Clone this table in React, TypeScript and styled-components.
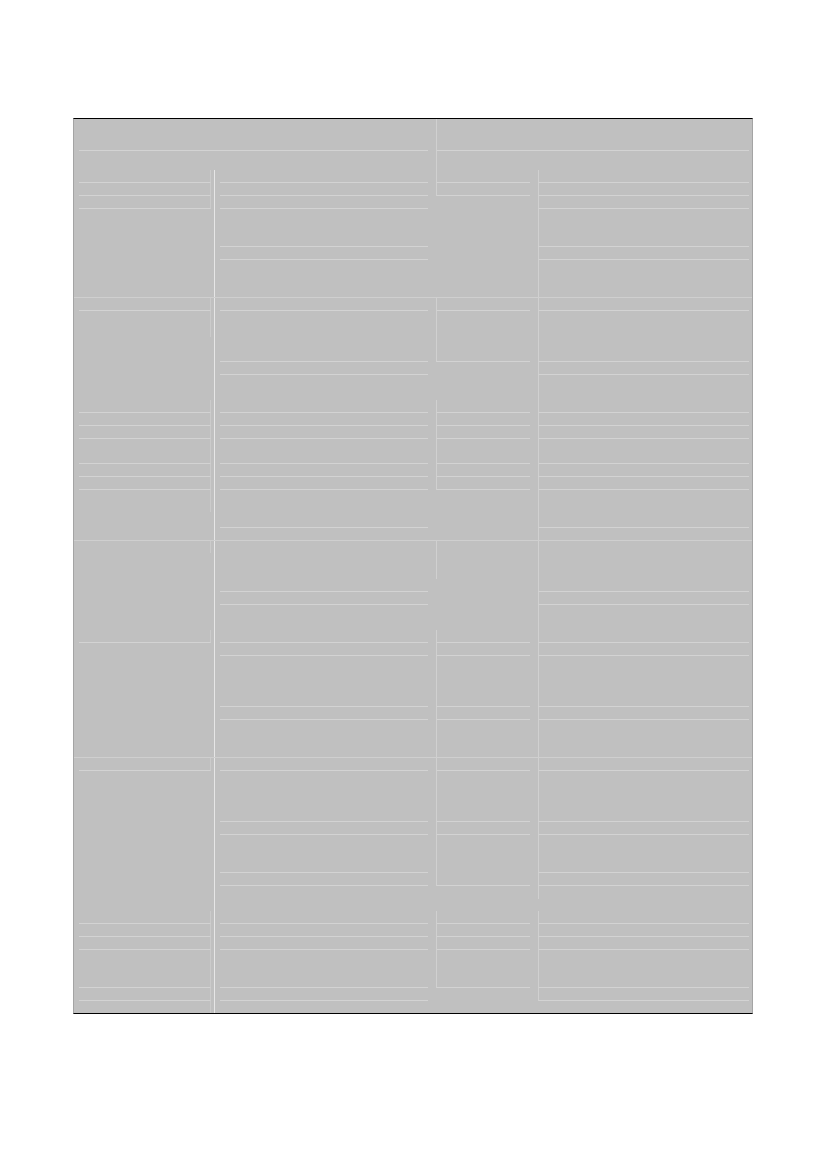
import React from "react";
import styled, { createGlobalStyle } from "styled-components";

const GlobalStyle = createGlobalStyle`
  html, body { margin: 0; padding: 0; background: #ffffff; }
  body { font-family: "Liberation Sans", Arial, sans-serif; }
`;

type Side = "left" | "right";

interface ColKind {
  pad: number;
  width: number;
  side: Side;
  sideColor: string;
  divider?: boolean;
}

interface ColSpec {
  kind: ColKind;
  rules: number[];
  sides?: [number, number][];
}

interface BandSpec {
  id: string;
  template: string;
  sep: boolean;
  top: number;
  bottom: number;
  cols: ColSpec[];
}

const RULE = "#d3d3d3";
const DIVIDER = "#e6e6e6";
const SEP = "#cfcfcf";

const K = {
  headLeft: { pad: 5, width: 349, side: "right", sideColor: "#cccccc" } as ColKind,
  headRight: { pad: 0, width: 313, side: "left", sideColor: "#d0d0d0" } as ColKind,
  c1: { pad: 5, width: 132, side: "right", sideColor: "#cbcbcb" } as ColKind,
  c2: { pad: 5, width: 208, side: "left", sideColor: "#d0d0d0", divider: true } as ColKind,
  c3: { pad: 0, width: 94, side: "left", sideColor: "#d0d0d0" } as ColKind,
  c4: { pad: 0, width: 211, side: "left", sideColor: "#d0d0d0" } as ColKind,
};

const BODY_TEMPLATE = "140px 222px 102px 214px";

const BANDS: BandSpec[] = [
  {
    id: "head",
    template: "362px 316px",
    sep: false,
    top: 119,
    bottom: 169,
    cols: [
      { kind: K.headLeft, rules: [150] },
      { kind: K.headRight, rules: [150], sides: [[119, 169]] },
    ],
  },
  {
    id: "b1",
    template: BODY_TEMPLATE,
    sep: false,
    top: 170,
    bottom: 296,
    cols: [
      { kind: K.c1, rules: [182, 195, 208], sides: [[170, 208]] },
      { kind: K.c2, rules: [182, 195, 208, 246, 259] },
      { kind: K.c3, rules: [182, 195], sides: [[170, 195]] },
      { kind: K.c4, rules: [182, 195, 208, 246, 259], sides: [[170, 296]] },
    ],
  },
  {
    id: "b2",
    template: BODY_TEMPLATE,
    sep: true,
    top: 298,
    bottom: 539,
    cols: [
      {
        kind: K.c1,
        rules: [310, 412, 425, 438, 463, 476, 489],
        sides: [
          [298, 336],
          [400, 511],
        ],
      },
      { kind: K.c2, rules: [310, 361, 374, 412, 425, 438, 463, 476, 489, 527] },
      {
        kind: K.c3,
        rules: [310, 361, 412, 425, 438, 463, 476, 489],
        sides: [
          [298, 361],
          [400, 489],
        ],
      },
      {
        kind: K.c4,
        rules: [310, 361, 374, 412, 425, 438, 463, 476, 489, 527],
        sides: [[298, 539]],
      },
    ],
  },
  {
    id: "b3",
    template: BODY_TEMPLATE,
    sep: true,
    top: 541,
    bottom: 756,
    cols: [
      {
        kind: K.c1,
        rules: [642],
        sides: [
          [541, 552],
          [630, 642],
        ],
      },
      { kind: K.c2, rules: [591, 604, 642, 655, 706, 719] },
      {
        kind: K.c3,
        rules: [642, 655, 706, 719],
        sides: [
          [541, 578],
          [630, 756],
        ],
      },
      { kind: K.c4, rules: [591, 604, 642, 655, 706, 719], sides: [[541, 756]] },
    ],
  },
  {
    id: "b4",
    template: BODY_TEMPLATE,
    sep: true,
    top: 758,
    bottom: 1012,
    cols: [
      {
        kind: K.c1,
        rules: [770, 923, 936, 949, 987, 1000],
        sides: [
          [758, 770],
          [911, 1012],
        ],
      },
      { kind: K.c2, rules: [770, 821, 834, 872, 885, 923, 936, 949, 987, 1000] },
      {
        kind: K.c3,
        rules: [770, 821, 834, 885, 923, 936, 949, 987],
        sides: [
          [758, 885],
          [911, 987],
        ],
      },
      {
        kind: K.c4,
        rules: [770, 821, 834, 872, 885, 923, 936, 949, 987, 1000],
        sides: [
          [758, 898],
          [911, 1000],
        ],
      },
    ],
  },
];

interface SlotSpec {
  h: number;
  rule: boolean;
  side: boolean;
}

function toSlots(top: number, bottom: number, col: ColSpec): SlotSpec[] {
  const sides = col.sides ?? [];
  const pts = new Set<number>([top, bottom + 1]);
  col.rules.forEach((y) => pts.add(y + 1));
  sides.forEach(([a, b]) => {
    pts.add(a);
    pts.add(b + 1);
  });
  const sorted = Array.from(pts)
    .filter((p) => p >= top && p <= bottom + 1)
    .sort((a, b) => a - b);
  const out: SlotSpec[] = [];
  for (let i = 0; i < sorted.length - 1; i++) {
    const c = sorted[i];
    const p = sorted[i + 1];
    out.push({
      h: p - c,
      rule: col.rules.includes(p - 1),
      side: sides.some(([a, b]) => a <= c && c <= b),
    });
  }
  return out;
}

const Page = styled.main`
  box-sizing: border-box;
  width: 826px;
  height: 1169px;
  padding: 118px 0 0 73px;
  overflow: hidden;
  background: #ffffff;
`;

const Sheet = styled.section`
  box-sizing: border-box;
  width: 680px;
  background: #c0c0c0;
  border-top: 1px solid #000000;
  border-bottom: 1px solid #000000;
  border-left: 1px solid #a4a4a4;
  border-right: 1px solid #a4a4a4;
  display: flex;
  flex-direction: column;
`;

const Band = styled.div<{ $template: string; $h: number; $sep: boolean }>`
  box-sizing: border-box;
  display: grid;
  grid-template-columns: ${(p) => p.$template};
  height: ${(p) => p.$h}px;
  border-top: ${(p) => (p.$sep ? `1px solid ${SEP}` : "none")};
`;

const Column = styled.div<{ $pad: number; $divider: boolean }>`
  box-sizing: border-box;
  display: flex;
  flex-direction: column;
  padding-left: ${(p) => p.$pad}px;
  border-left: ${(p) => (p.$divider ? `1px solid ${DIVIDER}` : "none")};
  overflow: hidden;
`;

const Slot = styled.div<{
  $h: number;
  $w: number;
  $rule: boolean;
  $side: Side | null;
  $sideColor: string;
}>`
  box-sizing: border-box;
  flex: 0 0 auto;
  width: ${(p) => p.$w}px;
  height: ${(p) => p.$h}px;
  border-bottom: ${(p) => (p.$rule ? `1px solid ${RULE}` : "none")};
  border-left: ${(p) => (p.$side === "left" ? `1px solid ${p.$sideColor}` : "none")};
  border-right: ${(p) => (p.$side === "right" ? `1px solid ${p.$sideColor}` : "none")};
`;

function BandView({ band }: { band: BandSpec }) {
  const h = band.bottom - band.top + 1 + (band.sep ? 1 : 0);
  return (
    <Band $template={band.template} $h={h} $sep={band.sep}>
      {band.cols.map((col, i) => (
        <Column key={i} $pad={col.kind.pad} $divider={!!col.kind.divider}>
          {toSlots(band.top, band.bottom, col).map((s, j) => (
            <Slot
              key={j}
              $h={s.h}
              $w={col.kind.width}
              $rule={s.rule}
              $side={s.side ? col.kind.side : null}
              $sideColor={col.kind.sideColor}
            />
          ))}
        </Column>
      ))}
    </Band>
  );
}

export default function App() {
  return (
    <>
      <GlobalStyle />
      <Page>
        <Sheet>
          {BANDS.map((b) => (
            <BandView key={b.id} band={b} />
          ))}
        </Sheet>
      </Page>
    </>
  );
}
